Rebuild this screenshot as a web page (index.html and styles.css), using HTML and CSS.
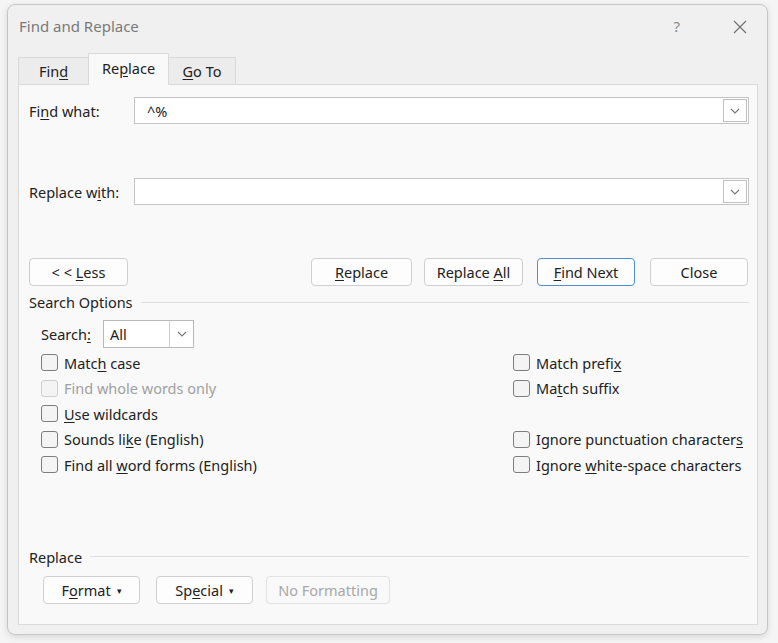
FILE: index.html
```html
<!DOCTYPE html>
<html>
<head>
<meta charset="utf-8">
<link rel="stylesheet" href="styles.css">
</head>
<body>
<div class="dialog">
  <div class="titlebar">
    <span class="title">Find and Replace</span>
    <span class="help">?</span>
    <svg class="close-x" width="14" height="14" viewBox="0 0 14 14"><path d="M1 1L13 13M13 1L1 13" stroke="#6e6e6e" stroke-width="1.1" fill="none"/></svg>
  </div>
  <div class="tabs">
    <div class="tab t-find"><span>Fin<u>d</u></span></div>
    <div class="tab t-replace active"><span>Re<u>p</u>lace</span></div>
    <div class="tab t-goto"><span><u>G</u>o To</span></div>
  </div>
  <div class="panel">
    <div class="field-row r-find">
      <label class="lbl">Fi<u>n</u>d what:</label>
      <div class="combo wide"><span class="val">^%</span><span class="arrow"><svg width="10" height="6" viewBox="0 0 10 6"><path d="M1 1L5 5L9 1" stroke="#777" stroke-width="1.1" fill="none"/></svg></span></div>
    </div>
    <div class="field-row r-repl">
      <label class="lbl">Replace w<u>i</u>th:</label>
      <div class="combo wide"><span class="val"></span><span class="arrow"><svg width="10" height="6" viewBox="0 0 10 6"><path d="M1 1L5 5L9 1" stroke="#777" stroke-width="1.1" fill="none"/></svg></span></div>
    </div>
    <div class="btn-row">
      <button class="btn b-less"><span>&lt; &lt; <u>L</u>ess</span></button>
      <div class="spacer"></div>
      <button class="btn b-rep"><span><u>R</u>eplace</span></button>
      <button class="btn b-repall"><span>Replace <u>A</u>ll</span></button>
      <button class="btn b-next default"><span><u>F</u>ind Next</span></button>
      <button class="btn b-close"><span>Close</span></button>
    </div>
    <div class="group-title g-search"><span>Search Options</span><div class="rule"></div></div>
    <div class="search-row">
      <label class="lbl2">Search<u>:</u></label>
      <div class="combo small"><span class="val">All</span><span class="arrow"><svg width="10" height="6" viewBox="0 0 10 6"><path d="M1 1L5 5L9 1" stroke="#777" stroke-width="1.1" fill="none"/></svg></span></div>
    </div>
    <div class="options">
      <div class="opt"><span class="cb"></span><span>Matc<u>h</u> case</span></div>
      <div class="opt"><span class="cb"></span><span>Match prefi<u>x</u></span></div>
      <div class="opt disabled"><span class="cb"></span><span>Find whole words only</span></div>
      <div class="opt"><span class="cb"></span><span>Ma<u>t</u>ch suffix</span></div>
      <div class="opt"><span class="cb"></span><span><u>U</u>se wildcards</span></div>
      <div class="opt"></div>
      <div class="opt"><span class="cb"></span><span>Sounds li<u>k</u>e (English)</span></div>
      <div class="opt"><span class="cb"></span><span>Ignore punctuation character<u>s</u></span></div>
      <div class="opt"><span class="cb"></span><span>Find all <u>w</u>ord forms (English)</span></div>
      <div class="opt"><span class="cb"></span><span>Ignore <u>w</u>hite-space characters</span></div>
    </div>
    <div class="group-title g-replace"><span>Replace</span><div class="rule"></div></div>
    <div class="fmt-row">
      <button class="btn b-fmt"><span>F<u>o</u>rmat <span class="tri">&#9662;</span></span></button>
      <button class="btn b-spec"><span>Sp<u>e</u>cial <span class="tri">&#9662;</span></span></button>
      <button class="btn b-nofmt" disabled><span>No Formatting</span></button>
    </div>
  </div>
</div>
</body>
</html>
```
FILE: styles.css
```css
* { box-sizing: border-box; }
html, body { margin: 0; padding: 0; }
body {
  background: #f5f5f5;
  width: 778px;
  height: 643px;
  overflow: hidden;
  font-family: "Noto Sans", "Open Sans", sans-serif;
  font-size: 14.5px;
  color: #222;
}
u { text-decoration: underline; text-underline-offset: 2px; text-decoration-thickness: 1px; }
.dialog {
  margin: 4px 0 0 7px;
  width: 761px;
  height: 631px;
  background: #f0f0f0;
  border: 1px solid #c6c6c6;
  border-radius: 8px;
  box-shadow: 0 2px 6px rgba(0,0,0,0.12);
  display: flex;
  flex-direction: column;
}
.titlebar {
  height: 48px;
  display: flex;
  align-items: center;
  padding-left: 11px;
  flex-shrink: 0;
}
.title { font-size: 15px; color: #7a7a7a; flex: 1; margin-top: -6px; }
.help { font-size: 15px; color: #8a8a8a; margin-right: 53px; margin-top: -6px; }
.close-x { margin-right: 20px; margin-top: -5px; }
.tabs {
  display: flex;
  align-items: flex-end;
  padding-left: 10px;
  height: 31px;
  flex-shrink: 0;
  position: relative;
  z-index: 1;
}
.tab {
  height: 27px;
  border: 1px solid #dadada;
  border-bottom: none;
  background: #ececec;
  display: flex;
  align-items: center;
  justify-content: center;
  color: #222;
}
.t-find { width: 70px; border-right: none; }
.t-replace { width: 81px; background: #f9f9f9; margin-bottom: -1px; height: 32px; padding-bottom: 4px; }
.t-goto { width: 67px; border-left: none; }
.panel {
  margin: 0 9px 9px 10px;
  flex: 1;
  background: #f9f9f9;
  border: 1px solid #dadada;
  padding: 0 8px 0 10px;
  display: flex;
  flex-direction: column;
}
.field-row { display: flex; align-items: center; height: 27px; }
.r-find { margin-top: 12px; }
.r-repl { margin-top: 54px; }
.lbl { width: 105px; }
.combo {
  height: 27px;
  background: #fff;
  border: 1px solid #c4c4c4;
  display: flex;
  align-items: center;
}
.combo.wide { flex: 1; }
.combo .val { flex: 1; padding-left: 12px; }
.combo .arrow {
  width: 24px;
  height: 25px;
  border-left: 1px solid #d0d0d0;
  display: flex;
  align-items: center;
  justify-content: center;
}
.combo.wide .arrow { height: 23px; border: 1px solid #c0c0c0; margin-right: 1px; }
.btn {
  font-family: inherit;
  font-size: 14.5px;
  color: #222;
  background: #fdfdfd;
  border: 1px solid #d0d0d0;
  border-radius: 4px;
  height: 28px;
  padding: 0;
  display: flex;
  align-items: center;
  justify-content: center;
}
.btn-row { display: flex; margin-top: 53px; align-items: center; }
.spacer { flex: 1; }
.b-less { width: 99px; }
.b-rep { width: 101px; }
.b-repall { width: 99px; margin-left: 12px; }
.b-next { width: 98px; margin-left: 14px; border-color: #4e8fcf; }
.b-close { width: 98px; margin-left: 15px; margin-right: 1px; }
.group-title { display: flex; align-items: center; height: 18px; }
.group-title .rule { flex: 1; height: 1px; background: #dedede; margin-left: 8px; }
.g-search { margin-top: 7px; }
.search-row { display: flex; align-items: center; margin-top: 9px; padding-left: 12px; }
.lbl2 { width: 62px; }
.combo.small { width: 91px; height: 28px; border-color: #b9b9b9; }
.combo.small .val { padding-left: 6px; }
.combo.small .arrow { height: 26px; }
.options {
  display: grid;
  grid-template-columns: 472px 1fr;
  grid-auto-rows: 25.5px;
  margin-top: 2px;
  padding-left: 12px;
}
.opt { display: flex; align-items: center; white-space: nowrap; }
.cb {
  width: 17px;
  height: 17px;
  border: 1px solid #7e7e7e;
  border-radius: 3px;
  background: #f4f4f4;
  margin-right: 6px;
  flex-shrink: 0;
}
.opt.disabled { color: #a0a0a0; }
.opt.disabled .cb { border-color: #cfcfcf; }
.g-replace { margin-top: 70px; }
.fmt-row { display: flex; margin-top: 10px; padding-left: 14px; }
.b-fmt { width: 97px; }
.b-spec { width: 97px; margin-left: 16px; }
.b-nofmt { width: 124px; margin-left: 13px; color: #a8a8a8; border-color: #e2e2e2; background: #f9f9f9; }
.tri { font-size: 9px; margin-left: 2px; vertical-align: 2px; }
```
